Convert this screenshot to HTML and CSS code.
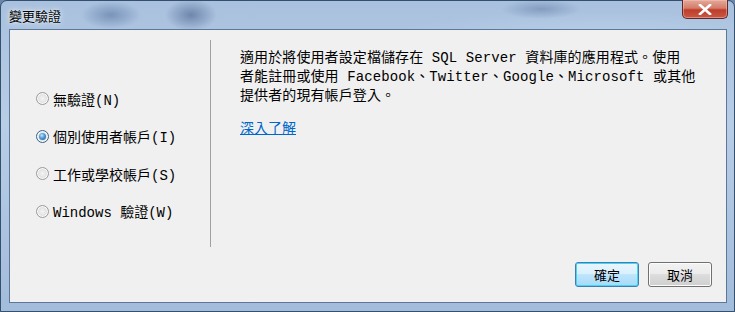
FILE: index.html
```html
<!DOCTYPE html>
<html lang="zh-Hant">
<head>
<meta charset="utf-8">
<title>變更驗證</title>
<link rel="stylesheet" href="styles.css">
</head>
<body>
<div class="window">
  <div class="titlebar">
    <span class="title">變更驗證</span>
    <div class="close" aria-label="關閉">
      <svg width="14" height="11" viewBox="0 0 14 11"><path d="M2 1 L12 10 M12 1 L2 10" stroke="#fff" stroke-width="2.6" stroke-linecap="square"/></svg>
    </div>
  </div>
  <div class="client">
    <div class="content">
      <div class="options">
        <label class="option"><span class="radio"></span>無驗證(N)</label>
        <label class="option"><span class="radio checked"></span>個別使用者帳戶(I)</label>
        <label class="option"><span class="radio"></span>工作或學校帳戶(S)</label>
        <label class="option"><span class="radio"></span>Windows 驗證(W)</label>
      </div>
      <div class="desc">
        <p class="text">適用於將使用者設定檔儲存在 SQL Server 資料庫的應用程式。使用<br>者能註冊或使用 Facebook、Twitter、Google、Microsoft 或其他<br>提供者的現有帳戶登入。</p>
        <a class="link" href="#">深入了解</a>
      </div>
    </div>
    <div class="buttons">
      <button class="btn default">確定</button>
      <button class="btn">取消</button>
    </div>
  </div>
</div>
</body>
</html>
```

FILE: styles.css
```css
* { box-sizing: border-box; }
html, body { margin: 0; padding: 0; }
body {
  width: 735px;
  height: 312px;
  overflow: hidden;
  background: #6b86a8;
  font-family: "Liberation Mono", "Noto Sans CJK TC", monospace;
}
.window {
  width: 735px;
  height: 312px;
  display: flex;
  flex-direction: column;
  padding: 0 7px 8px 8px;
  border: 1px solid #33506f;
  border-radius: 7px 7px 0 0;
  background:
    radial-gradient(ellipse 30px 14px at 110px 14px, rgba(60,90,140,0.45), transparent),
    radial-gradient(ellipse 26px 16px at 190px 14px, rgba(50,75,120,0.5), transparent),
    radial-gradient(ellipse 40px 10px at 540px 8px, rgba(60,90,140,0.35), transparent),
    radial-gradient(ellipse 200px 20px at 600px 30px, rgba(200,220,240,0.35), transparent),
    linear-gradient(180deg, #a9c1de 0%, #b8cde6 40%, #a3bcdb 100%);
}
.titlebar {
  height: 28px;
  flex: none;
  display: flex;
  align-items: flex-start;
  justify-content: space-between;
}
.title {
  font-family: "Noto Sans CJK TC", sans-serif;
  font-size: 13px;
  line-height: 16px;
  color: #000;
  margin-top: 7px;
  text-shadow: 0 0 6px rgba(255,255,255,0.9), 0 0 2px rgba(255,255,255,0.8);
}
.close {
  width: 46px;
  height: 19px;
  margin-top: -1px;
  margin-right: -1px;
  border: 1px solid #5c2b2b;
  border-top: none;
  border-radius: 0 0 5px 5px;
  background: linear-gradient(180deg, #e4a99a 0%, #d47d6a 45%, #bf3d2a 55%, #c85a45 100%);
  box-shadow: inset 0 0 0 1px rgba(255,200,190,0.45);
  display: flex;
  align-items: center;
  justify-content: center;
}
.client {
  flex: 1;
  display: flex;
  flex-direction: column;
  background: #f0f0f0;
  border: 1px solid #5d7799;
}
.content {
  flex: 1;
  display: flex;
  padding-top: 10px;
}
.options {
  width: 200px;
  padding-top: 40px;
  padding-left: 26px;
  display: flex;
  flex-direction: column;
}
.option {
  height: 37.5px;
  display: flex;
  align-items: center;
  gap: 4px;
  font-size: 14px;
  color: #000;
}
.radio {
  width: 13px;
  height: 13px;
  flex: none;
  border-radius: 50%;
  border: 1px solid #9a9a9a;
  background: radial-gradient(circle at 50% 50%, #f4f4f4 0%, #e2e2e2 55%, #d0d0d0 100%);
  box-shadow: inset 0 0 0 1px #fbfbfb;
  display: flex;
  align-items: center;
  justify-content: center;
}
.radio.checked {
  border-color: #3c5f86;
}
.radio.checked::after {
  content: "";
  width: 7px;
  height: 7px;
  border-radius: 50%;
  background: radial-gradient(circle at 40% 35%, #bfe4fb 0%, #4b9ad6 45%, #1d5a93 100%);
}
.desc {
  height: 207px;
  border-left: 1px solid #a0a0a0;
  padding: 9px 0 0 29px;
  flex: 1;
}
.text {
  margin: 0;
  font-size: 14px;
  line-height: 19px;
  letter-spacing: 0.1px;
  color: #000;
}
.link {
  display: inline-block;
  margin-top: 14px;
  font-size: 14px;
  line-height: 19px;
  color: #0066cc;
  text-decoration: underline;
}
.buttons {
  display: flex;
  justify-content: flex-end;
  gap: 9px;
  padding: 0 14px 15px 0;
}
.btn {
  width: 64px;
  height: 25px;
  font-family: "Noto Sans CJK TC", sans-serif;
  font-size: 13px;
  color: #000;
  border: 1px solid #707070;
  border-radius: 3px;
  background: linear-gradient(180deg, #f2f2f2 0%, #ebebeb 49%, #dddddd 50%, #cfcfcf 100%);
  box-shadow: inset 0 0 0 1px #fcfcfc;
  padding: 0;
}
.btn.default {
  border-color: #3c7fb1;
  background: linear-gradient(180deg, #eaf6fd 0%, #d9f0fc 49%, #bee6fd 50%, #a7d9f5 100%);
  box-shadow: inset 0 0 0 1px #48d3f8;
}
```
